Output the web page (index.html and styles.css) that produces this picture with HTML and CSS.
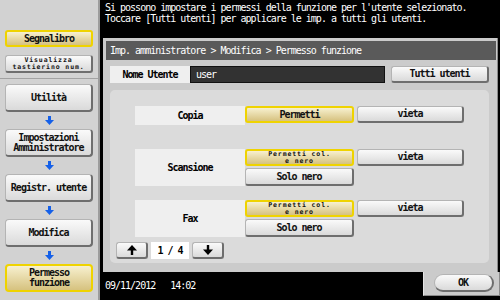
FILE: index.html
```html
<html>
<head>
  <meta charset="UTF-8">
  <title>Permesso funzione</title>
  <link rel="stylesheet" href="styles.css">
</head>
<body>
  <div class="screen">
    <div class="sidebar">
      <div class="side-top">
        <div class="btn side-btn yellow">Segnalibro</div>
        <div class="btn side-btn small">Visualizza<br>tastierino num.</div>
      </div>
      <div class="side-nav">
        <div class="btn nav-btn">Utilità</div>
        <div class="flow"><svg width="9" height="9" viewBox="0 0 9 9"><rect x="3" y="0" width="3" height="4" fill="#1560e8"/><polygon points="0,4 9,4 4.5,9" fill="#1560e8"/></svg></div>
        <div class="btn nav-btn">Impostazioni<br>Amministratore</div>
        <div class="flow"><svg width="9" height="9" viewBox="0 0 9 9"><rect x="3" y="0" width="3" height="4" fill="#1560e8"/><polygon points="0,4 9,4 4.5,9" fill="#1560e8"/></svg></div>
        <div class="btn nav-btn">Registr. utente</div>
        <div class="flow"><svg width="9" height="9" viewBox="0 0 9 9"><rect x="3" y="0" width="3" height="4" fill="#1560e8"/><polygon points="0,4 9,4 4.5,9" fill="#1560e8"/></svg></div>
        <div class="btn nav-btn">Modifica</div>
        <div class="flow"><svg width="9" height="9" viewBox="0 0 9 9"><rect x="3" y="0" width="3" height="4" fill="#1560e8"/><polygon points="0,4 9,4 4.5,9" fill="#1560e8"/></svg></div>
        <div class="btn nav-btn yellow">Permesso<br>funzione</div>
      </div>
    </div>

    <div class="main">
      <div class="message">Si possono impostare i permessi della funzione per l'utente selezionato.<br>Toccare [Tutti utenti] per applicare le imp. a tutti gli utenti.</div>

      <div class="panel">
        <div class="title">Imp. amministratore &gt; Modifica &gt; Permesso funzione</div>
        <div class="user-row">
          <div class="user-label">Nome Utente</div>
          <div class="user-value">user</div>
          <div class="btn all-btn">Tutti utenti</div>
        </div>
        <div class="content">
          <div class="perm-row">
            <div class="perm-label">Copia</div>
            <div class="btn opt yellow">Permetti</div>
            <div class="btn opt deny">vieta</div>
          </div>
          <div class="perm-row tall">
            <div class="perm-label">Scansione</div>
            <div class="btn opt yellow small">Permetti col.<br>e nero</div>
            <div class="btn opt deny">vieta</div>
            <div class="btn opt">Solo nero</div>
          </div>
          <div class="perm-row tall last">
            <div class="perm-label">Fax</div>
            <div class="btn opt yellow small">Permetti col.<br>e nero</div>
            <div class="btn opt deny">vieta</div>
            <div class="btn opt">Solo nero</div>
          </div>
          <div class="pager">
            <div class="btn page-btn"><svg width="10" height="10" viewBox="0 0 10 10"><rect x="3.8" y="4" width="2.4" height="6" fill="#000"/><polygon points="0,5.5 5,0 10,5.5" fill="#000"/></svg></div>
            <div class="page-num">1 / 4</div>
            <div class="btn page-btn"><svg width="10" height="10" viewBox="0 0 10 10"><rect x="3.8" y="0" width="2.4" height="6" fill="#000"/><polygon points="0,4.5 10,4.5 5,10" fill="#000"/></svg></div>
          </div>
        </div>
      </div>

      <div class="bottom">
        <div class="status">09/11/2012&nbsp;&nbsp;&nbsp;14:02</div>
        <div class="ok-area">
          <div class="btn ok-btn">OK</div>
        </div>
      </div>
    </div>
  </div>
</body>
</html>
```

FILE: styles.css
```css
body {
  margin: 0;
  font-family: "DejaVu Sans Mono", "Liberation Mono", monospace;
  font-size: 10px;
  letter-spacing: -1px;
  color: #000;
}
.screen {
  display: flex;
  width: 500px;
  height: 300px;
  overflow: hidden;
}

/* left column */
.sidebar {
  width: 100px;
  box-sizing: border-box;
  border-right: 2px solid #9c9c9c;
  background: #d2d2d2;
}
.side-top {
  height: 79px;
  box-sizing: border-box;
  padding: 30px 5px 0;
  border-bottom: 1px solid #a2a2a2;
}
.side-nav {
  padding: 5px 5px 0;
}
.btn {
  display: flex;
  align-items: center;
  justify-content: center;
  text-align: center;
  box-sizing: border-box;
  background: linear-gradient(#fafafa, #dadada);
  border: 1px solid #b4b4b4;
  border-right: 2px solid #6e6e6e;
  border-bottom: 2px solid #6e6e6e;
  border-radius: 3px;
  line-height: 10px;
  font-weight: bold;
  color: #111;
}
.btn.yellow {
  background: linear-gradient(#f7f0cf, #d6c27f);
  border: 2px solid #efd300;
}
.btn.small {
  font-size: 6.5px;
  letter-spacing: 0.9px;
  line-height: 7px;
}
.side-btn {
  height: 17px;
}
.side-btn.small {
  height: 18px;
  margin-top: 8px;
}
.nav-btn {
  height: 28px;
  border-radius: 4px;
}
.flow {
  height: 17px;
  display: flex;
  align-items: center;
  justify-content: center;
}

/* right column */
.main {
  width: 400px;
  background: #000;
}
.message {
  height: 38px;
  box-sizing: border-box;
  padding: 3px 5px 0;
  color: #fff;
  line-height: 10.5px;
}
.panel {
  width: 395px;
  height: 234px;
  margin-left: 3px;
  box-sizing: border-box;
  padding: 3px 1px 0 3px;
  background: #cbcbcb;
  border-right: 1px solid #8a8a8a;
}
.title {
  height: 19px;
  line-height: 19px;
  padding-left: 4px;
  background: #5a5a5a;
  color: #fff;
}
.user-row {
  display: flex;
  height: 17px;
  margin: 6px 7px 0 4px;
  line-height: 17px;
}
.user-label {
  width: 80px;
  text-align: center;
  background: #efefef;
  font-weight: bold;
}
.user-value {
  width: 195px;
  box-sizing: border-box;
  padding-left: 5px;
  background: #323232;
  border: 1px solid #111;
  color: #fff;
  line-height: 15px;
}
.all-btn {
  width: 98px;
  margin-left: 6px;
}
.content {
  height: 173px;
  margin: 7px 7px 0 4px;
  box-sizing: border-box;
  padding: 16px 0 0 6px;
  background: #dbdbdb;
  border-radius: 5px;
}
.perm-row {
  display: grid;
  grid-template-columns: 110px 109px 110px;
  grid-template-rows: 17px;
  row-gap: 2px;
  margin: 0 0 24px 19px;
}
.perm-row.tall {
  grid-template-rows: 17px 18px;
  margin-bottom: 14px;
}
.perm-row.last {
  margin-bottom: 5px;
}
.perm-label {
  grid-row: 1 / 3;
  display: flex;
  align-items: center;
  justify-content: center;
  background: #efefef;
  font-weight: bold;
}
.deny {
  margin-left: 3px;
}
.pager {
  display: flex;
  height: 17px;
}
.page-btn {
  width: 32px;
}
.page-num {
  width: 38px;
  margin: 0 3px;
  background: #fff;
  text-align: center;
  line-height: 17px;
  font-weight: bold;
}

/* bottom bar */
.bottom {
  display: flex;
  height: 28px;
}
.status {
  width: 320px;
  padding-left: 5px;
  color: #fff;
  line-height: 28px;
}
.ok-area {
  width: 78px;
  height: 24px;
  box-sizing: border-box;
  padding: 2px 0 0 10px;
  background: #cbcbcb;
  border-right: 1px solid #8a8a8a;
  border-bottom: 1px solid #8a8a8a;
  border-left: 1px solid #e4e4e4;
}
.ok-btn {
  width: 60px;
  height: 18px;
  border-radius: 9px;
}
```
